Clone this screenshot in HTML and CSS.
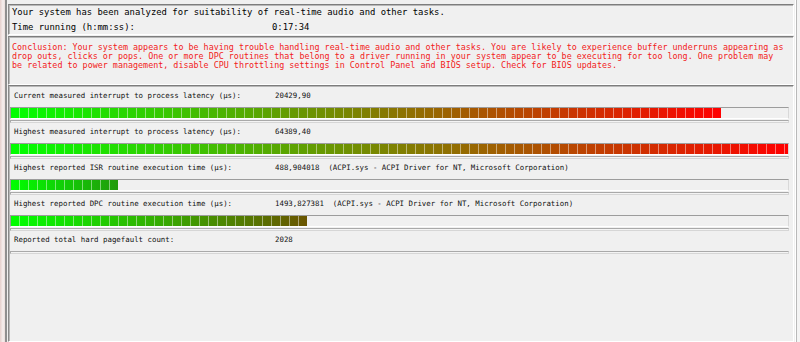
FILE: index.html
```html
<!DOCTYPE html>
<html lang="en">
<head>
<meta charset="utf-8">
<title>Latency check</title>
<link rel="stylesheet" href="styles.css">
</head>
<body>
<div class="screen">
  <div class="wall"></div>
  <div class="window">
    <section class="panel info">
      <div class="line">Your system has been analyzed for suitability of real-time audio and other tasks.</div>
      <div class="line kv"><span class="k">Time running (h:mm:ss):</span><span class="v">0:17:34</span></div>
    </section>
    <section class="panel conclusion">
      <p class="msg">Conclusion: Your system appears to be having trouble handling real-time audio and other tasks. You are likely to experience buffer underruns appearing as<br>drop outs, clicks or pops. One or more DPC routines that belong to a driver running in your system appear to be executing for too long. One problem may<br>be related to power management, disable CPU throttling settings in Control Panel and BIOS setup. Check for BIOS updates.</p>
    </section>
    <section class="panel measures">
      <div class="metric">
        <div class="mlabel"><span class="k">Current measured interrupt to process latency (µs):</span><span class="v">20429,90</span></div>
        <div class="bar"><div class="fill to-red" style="width:710px"></div></div>
        <div class="groove"></div>
      </div>
      <div class="metric">
        <div class="mlabel"><span class="k">Highest measured interrupt to process latency (µs):</span><span class="v">64389,40</span></div>
        <div class="bar"><div class="fill to-red" style="width:777px"></div></div>
        <div class="groove"></div>
      </div>
      <div class="metric">
        <div class="mlabel"><span class="k">Highest reported ISR routine execution time (µs):</span><span class="v">488,904018&nbsp;&nbsp;(ACPI.sys - ACPI Driver for NT, Microsoft Corporation)</span></div>
        <div class="bar"><div class="fill to-darkgreen" style="width:107px"></div></div>
        <div class="groove"></div>
      </div>
      <div class="metric">
        <div class="mlabel"><span class="k">Highest reported DPC routine execution time (µs):</span><span class="v">1493,827381&nbsp;&nbsp;(ACPI.sys - ACPI Driver for NT, Microsoft Corporation)</span></div>
        <div class="bar"><div class="fill to-olive" style="width:296px"></div></div>
        <div class="groove"></div>
      </div>
      <div class="metric">
        <div class="mlabel"><span class="k">Reported total hard pagefault count:</span><span class="v">2028</span></div>
        <div class="groove"></div>
      </div>
    </section>
  </div>
  <div class="rim"></div>
</div>
</body>
</html>
```
FILE: styles.css
```css
html, body {
  margin: 0;
  padding: 0;
  background: #f0f0f0;
}
.screen {
  display: flex;
  width: 800px;
  height: 342px;
  overflow: hidden;
}
.wall {
  width: 5px;
  flex: none;
  background: linear-gradient(to right, #e6cfcc, #f6f0ef 60%, #e9dcda);
}
.window {
  flex: 1;
  display: flex;
  flex-direction: column;
  background: #f0f0f0;
  border-left: 2px solid #8f8f8f;
  padding: 4px 1px 0 1px;
  font-family: "DejaVu Sans Mono", "Liberation Mono", monospace;
  color: #000;
}
.rim {
  width: 5px;
  flex: none;
  background: #f4f4f4;
  border-left: 1px solid #ffffff;
  box-shadow: inset 1px 0 #b9b9b9;
}
.panel {
  box-sizing: border-box;
  border-top: 1px solid #7d7d7d;
  border-left: 1px solid #8a8a8a;
  border-bottom: 1px solid #ffffff;
  border-right: 1px solid #ffffff;
  box-shadow: inset 1px 1px #b8b8b8;
  background: #f0f0f0;
}
.info {
  padding: 0 3px;
  font-size: 8.9px;
}
.info .line {
  line-height: 14.5px;
  white-space: nowrap;
}
.kv {
  display: flex;
}
.kv .k {
  width: 260px;
  flex: none;
}
.conclusion {
  margin-top: 1px;
  height: 49px;
  padding: 6px 3px 0 3px;
}
.msg {
  margin: 0;
  font-size: 8.4px;
  line-height: 8.75px;
  color: #f21b1b;
  white-space: nowrap;
}
.measures {
  flex: 1;
  padding: 1px 4px 0 1px;
}
.mlabel {
  display: flex;
  height: 20px;
  box-sizing: border-box;
  padding: 0 0 2px 4px;
  line-height: 18px;
  font-size: 7.4px;
  color: #111;
  white-space: nowrap;
}
.mlabel .k {
  width: 261px;
  flex: none;
}
.bar {
  box-sizing: border-box;
  height: 12px;
  border-top: 1px solid #9c9c9c;
  border-left: 1px solid #9c9c9c;
  border-bottom: 1px solid #ffffff;
  border-right: 1px solid #d8d8d8;
  background: #f0f0f0;
}
.fill {
  height: 10px;
  background-image:
    repeating-linear-gradient(to right, transparent 0 8px, rgba(255, 255, 255, 0.45) 8px 9px),
    var(--ramp);
}
.to-red { --ramp: linear-gradient(to right, #00ff00, #ff0000); }
.to-darkgreen { --ramp: linear-gradient(to right, #00ff00, #229a0c); }
.to-olive { --ramp: linear-gradient(to right, #00ff00, #3aa400 55%, #6a5500); }
.groove {
  box-sizing: border-box;
  margin-top: 1px;
  height: 3px;
  border-top: 1px solid #a9a9a9;
  border-left: 1px solid #a9a9a9;
  border-bottom: 1px solid #d6d6d6;
  border-right: 1px solid #d6d6d6;
  background: #f4f4f4;
}
.metric:last-child .groove {
  margin-top: 0;
}
```
